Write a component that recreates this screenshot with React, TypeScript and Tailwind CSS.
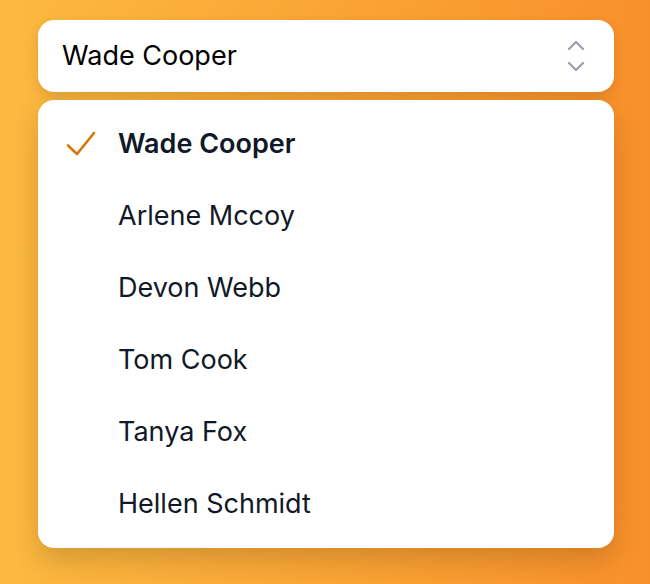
import { useState } from "react";

const people = [
  "Wade Cooper",
  "Arlene Mccoy",
  "Devon Webb",
  "Tom Cook",
  "Tanya Fox",
  "Hellen Schmidt",
];

function CheckIcon() {
  return (
    <svg viewBox="0 0 32 26" className="w-[32px] h-[26px]" fill="none">
      <path
        d="M2 14.5l9 8.5 17-21"
        stroke="#d97706"
        strokeWidth="2.6"
        strokeLinecap="round"
        strokeLinejoin="round"
      />
    </svg>
  );
}

function UpDownIcon() {
  return (
    <svg viewBox="0 0 20 32" className="w-[20px] h-[32px]" fill="none">
      <path
        d="M3 9l7-7 7 7M3 23l7 7 7-7"
        stroke="#9ca3af"
        strokeWidth="2.4"
        strokeLinecap="round"
        strokeLinejoin="round"
      />
    </svg>
  );
}

export default function App() {
  const [selected, setSelected] = useState(people[0]);

  return (
    <div
      className="w-[650px] h-[584px] bg-linear-to-r from-[#fcb940] to-[#f8902a] pt-[20px] px-[38px]"
      style={{ fontFamily: "Inter, 'Noto Sans', sans-serif" }}
    >
      <div className="w-[576px]">
        <button className="w-full h-[72px] bg-white rounded-[16px] shadow-[0_6px_14px_rgba(0,0,0,0.12)] flex items-center justify-between pl-[24px] pr-[28px] text-left">
          <span className="text-[27px] text-black">{selected}</span>
          <UpDownIcon />
        </button>

        <ul className="mt-[8px] bg-white rounded-[16px] py-[8px] shadow-[0_12px_28px_rgba(0,0,0,0.16)]">
          {people.map((p) => {
            const isSel = p === selected;
            return (
              <li
                key={p}
                onClick={() => setSelected(p)}
                className="relative h-[72px] flex items-center pl-[80px] cursor-pointer"
              >
                {isSel && (
                  <span className="absolute left-[28px] top-[23px]">
                    <CheckIcon />
                  </span>
                )}
                <span
                  className={`text-[27px] text-[#111827] ${
                    isSel ? "font-semibold" : "font-normal"
                  }`}
                >
                  {p}
                </span>
              </li>
            );
          })}
        </ul>
      </div>
    </div>
  );
}
